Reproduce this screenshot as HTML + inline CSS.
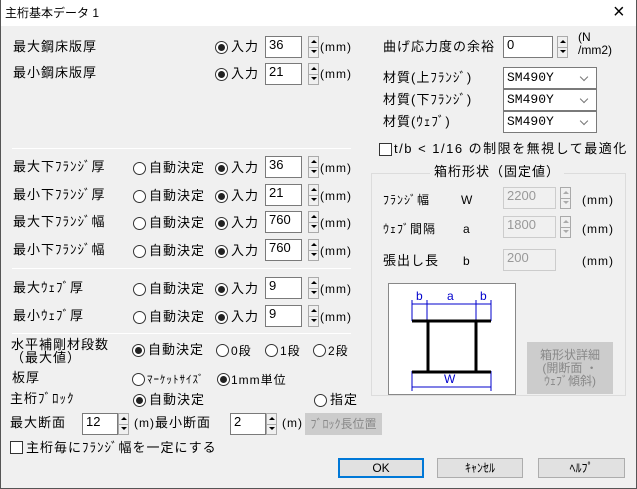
<!DOCTYPE html>
<html><head><meta charset="utf-8"><style>
*{margin:0;padding:0;box-sizing:border-box}
body{width:637px;height:489px;overflow:hidden;background:#f0f0f0;font-family:"Liberation Sans","Noto Sans CJK JP",sans-serif;font-size:13px;color:#000;position:relative}
.a{position:absolute;white-space:nowrap;line-height:16px;letter-spacing:1px}
.tb{position:absolute;left:0;top:0;width:637px;height:26px;background:#fff}
.frame{position:absolute;left:0;top:0;width:637px;height:489px;border:1px solid #555;border-top:none}
.in{position:absolute;background:#fff;border:1px solid #7a7a7a;height:22px;font-size:13px;line-height:14px;padding:1px 3px;font-family:"Liberation Sans Narrow","Liberation Sans",sans-serif}
.dis{background:#f0f0f0;border-color:#ccc;color:#999}
.sp{position:absolute;width:11px;height:22px;border:1px solid #aaa;background:#f0f0f0}
.sp:before{content:"";position:absolute;left:2px;top:3px;border:3px solid transparent;border-bottom:3px solid #000;border-top:none}
.sp:after{content:"";position:absolute;left:2px;top:13px;border:3px solid transparent;border-top:3px solid #000;border-bottom:none}
.sp i{position:absolute;left:0;top:10px;width:9px;height:1px;background:#aaa}
.sp.d:before{border-bottom-color:#aaa}.sp.d:after{border-top-color:#aaa}
.r{position:absolute;width:13px;height:13px;border:1px solid #333;border-radius:50%;background:#fff}
.r.on:after{content:"";position:absolute;left:2px;top:2px;width:7px;height:7px;border-radius:50%;background:#222}
.cb{position:absolute;width:13px;height:13px;border:1px solid #333;background:#fff}
.hr{position:absolute;height:1px;background:#a0a0a0;border-bottom:1px solid #fff}
.cmb{position:absolute;background:#fff;border:1px solid #7a7a7a;height:22px;width:94px;font-family:"Liberation Mono",monospace;font-size:13px;line-height:20px;padding-left:3px}
.cmb:after{content:"";position:absolute;right:9px;top:6px;width:5px;height:5px;border-right:1px solid #777;border-bottom:1px solid #777;transform:rotate(45deg)}
.btn{position:absolute;background:#e1e1e1;border:1px solid #adadad;text-align:center;font-size:12px;line-height:18px}
</style></head><body>
<div class="tb"></div>
<div class="a" style="left:5px;top:5px;font-size:12px;letter-spacing:0">主桁基本データ 1</div>
<div class="a" style="left:613px;top:2px;font-size:20px;line-height:20px;font-weight:200">×</div>
<div class="frame"></div>

<div class="a" style="left:13px;top:39px">最大鋼床版厚</div>
<div class="r on" style="left:215px;top:41px"></div><div class="a" style="left:231px;top:39px">入力</div>
<div class="in" style="left:265px;top:36px;width:37px">36</div><div class="sp" style="left:308px;top:36px"><i></i></div><div class="a" style="left:320px;top:39px;font-size:12px">(mm)</div>
<div class="a" style="left:13px;top:65px">最小鋼床版厚</div>
<div class="r on" style="left:215px;top:68px"></div><div class="a" style="left:231px;top:66px">入力</div>
<div class="in" style="left:265px;top:63px;width:37px">21</div><div class="sp" style="left:308px;top:63px"><i></i></div><div class="a" style="left:320px;top:66px;font-size:12px">(mm)</div>

<div class="hr" style="left:12px;top:148px;width:339px"></div>

<div class="a" style="left:13px;top:159px">最大下ﾌﾗﾝｼﾞ厚</div>
<div class="a" style="left:13px;top:187px">最小下ﾌﾗﾝｼﾞ厚</div>
<div class="a" style="left:13px;top:214px">最大下ﾌﾗﾝｼﾞ幅</div>
<div class="a" style="left:13px;top:242px">最小下ﾌﾗﾝｼﾞ幅</div>
<div class="a" style="left:13px;top:280px">最大ｳｪﾌﾞ厚</div>
<div class="a" style="left:13px;top:308px">最小ｳｪﾌﾞ厚</div>

<div class="r" style="left:133px;top:162px"></div><div class="a" style="left:149px;top:160px">自動決定</div>
<div class="r on" style="left:215px;top:162px"></div><div class="a" style="left:231px;top:160px">入力</div>
<div class="in" style="left:265px;top:156px;width:37px">36</div><div class="sp" style="left:308px;top:156px"><i></i></div><div class="a" style="left:320px;top:160px;font-size:12px">(mm)</div>

<div class="r" style="left:133px;top:190px"></div><div class="a" style="left:149px;top:188px">自動決定</div>
<div class="r on" style="left:215px;top:190px"></div><div class="a" style="left:231px;top:188px">入力</div>
<div class="in" style="left:265px;top:184px;width:37px">21</div><div class="sp" style="left:308px;top:184px"><i></i></div><div class="a" style="left:320px;top:188px;font-size:12px">(mm)</div>

<div class="r" style="left:133px;top:217px"></div><div class="a" style="left:149px;top:215px">自動決定</div>
<div class="r on" style="left:215px;top:217px"></div><div class="a" style="left:231px;top:215px">入力</div>
<div class="in" style="left:265px;top:211px;width:37px">760</div><div class="sp" style="left:308px;top:211px"><i></i></div><div class="a" style="left:320px;top:215px;font-size:12px">(mm)</div>

<div class="r" style="left:133px;top:245px"></div><div class="a" style="left:149px;top:243px">自動決定</div>
<div class="r on" style="left:215px;top:245px"></div><div class="a" style="left:231px;top:243px">入力</div>
<div class="in" style="left:265px;top:239px;width:37px">760</div><div class="sp" style="left:308px;top:239px"><i></i></div><div class="a" style="left:320px;top:243px;font-size:12px">(mm)</div>

<div class="hr" style="left:12px;top:268px;width:339px"></div>

<div class="r" style="left:133px;top:283px"></div><div class="a" style="left:149px;top:281px">自動決定</div>
<div class="r on" style="left:215px;top:283px"></div><div class="a" style="left:231px;top:281px">入力</div>
<div class="in" style="left:265px;top:277px;width:37px">9</div><div class="sp" style="left:308px;top:277px"><i></i></div><div class="a" style="left:320px;top:281px;font-size:12px">(mm)</div>

<div class="r" style="left:133px;top:311px"></div><div class="a" style="left:149px;top:309px">自動決定</div>
<div class="r on" style="left:215px;top:311px"></div><div class="a" style="left:231px;top:309px">入力</div>
<div class="in" style="left:265px;top:305px;width:37px">9</div><div class="sp" style="left:308px;top:305px"><i></i></div><div class="a" style="left:320px;top:309px;font-size:12px">(mm)</div>

<div class="hr" style="left:12px;top:333px;width:339px"></div>

<div class="a" style="left:11px;top:338px;line-height:13px">水平補剛材段数<br>（最大値）</div>
<div class="r on" style="left:132px;top:344px"></div><div class="a" style="left:148px;top:342px">自動決定</div>
<div class="r" style="left:216px;top:344px"></div><div class="a" style="left:231px;top:343px;font-size:12px">0段</div>
<div class="r" style="left:265px;top:344px"></div><div class="a" style="left:280px;top:343px;font-size:12px">1段</div>
<div class="r" style="left:313px;top:344px"></div><div class="a" style="left:328px;top:343px;font-size:12px">2段</div>

<div class="a" style="left:12px;top:370px">板厚</div>
<div class="r" style="left:132px;top:373px"></div><div class="a" style="left:147px;top:372px;font-size:11px">ﾏｰｹｯﾄｻｲｽﾞ</div>
<div class="r on" style="left:217px;top:373px"></div><div class="a" style="left:231px;top:372px;font-size:12px">1mm単位</div>

<div class="a" style="left:10px;top:391px">主桁ﾌﾞﾛｯｸ</div>
<div class="r on" style="left:133px;top:394px"></div><div class="a" style="left:149px;top:392px">自動決定</div>
<div class="r" style="left:314px;top:394px"></div><div class="a" style="left:330px;top:392px">指定</div>

<div class="a" style="left:10px;top:415px">最大断面</div>
<div class="in" style="left:82px;top:413px;width:36px">12</div><div class="sp" style="left:118px;top:413px"><i></i></div><div class="a" style="left:134px;top:415px;font-size:12px">(m)</div>
<div class="a" style="left:155px;top:415px">最小断面</div>
<div class="in" style="left:230px;top:413px;width:36px">2</div><div class="sp" style="left:266px;top:413px"><i></i></div><div class="a" style="left:282px;top:415px;font-size:12px">(m)</div>
<div class="btn" style="left:305px;top:413px;width:77px;height:22px;background:#ccc;border-color:#ccc;color:#888;line-height:20px">ﾌﾞﾛｯｸ長位置</div>

<div class="cb" style="left:10px;top:441px"></div><div class="a" style="left:26px;top:440px">主桁毎にﾌﾗﾝｼﾞ幅を一定にする</div>

<div class="a" style="left:383px;top:39px">曲げ応力度の余裕</div>
<div class="in" style="left:503px;top:36px;width:50px">0</div><div class="sp" style="left:557px;top:36px"><i></i></div>
<div class="a" style="left:578px;top:31px;font-size:12px;line-height:13px;letter-spacing:0">(N<br>/mm2)</div>
<div class="a" style="left:383px;top:70px">材質(上ﾌﾗﾝｼﾞ)</div>
<div class="a" style="left:383px;top:92px">材質(下ﾌﾗﾝｼﾞ)</div>
<div class="a" style="left:383px;top:114px">材質(ｳｪﾌﾞ)</div>
<div class="cmb" style="left:503px;top:67px">SM490Y</div>
<div class="cmb" style="left:503px;top:89px">SM490Y</div>
<div class="cmb" style="left:503px;top:111px">SM490Y</div>
<div class="cb" style="left:379px;top:143px"></div><div class="a" style="left:394px;top:141px;letter-spacing:1.5px">t/b &lt; 1/16 の制限を無視して最適化</div>

<div style="position:absolute;left:371px;top:173px;width:255px;height:223px;border:1px solid #dcdcdc"></div>
<div class="a" style="left:430px;top:164px;background:#f0f0f0;padding:0 4px">箱桁形状（固定値）</div>
<div class="a" style="left:383px;top:192px;font-size:12px">ﾌﾗﾝｼﾞ幅</div><div class="a" style="left:461px;top:192px;font-size:12px">W</div>
<div class="in dis" style="left:503px;top:187px;width:53px">2200</div><div class="sp d" style="left:560px;top:187px"><i></i></div><div class="a" style="left:582px;top:192px;font-size:12px">(mm)</div>
<div class="a" style="left:383px;top:221px;font-size:12px">ｳｪﾌﾞ間隔</div><div class="a" style="left:463px;top:221px;font-size:12px">a</div>
<div class="in dis" style="left:503px;top:216px;width:53px">1800</div><div class="sp d" style="left:560px;top:216px"><i></i></div><div class="a" style="left:582px;top:221px;font-size:12px">(mm)</div>
<div class="a" style="left:383px;top:253px">張出し長</div><div class="a" style="left:463px;top:253px;font-size:12px">b</div>
<div class="in dis" style="left:503px;top:249px;width:53px">200</div><div class="a" style="left:582px;top:253px;font-size:12px">(mm)</div>

<svg style="position:absolute;left:388px;top:283px" width="128" height="112">
<rect x="0.5" y="0.5" width="127" height="111" fill="#fff" stroke="#888"/>
<g stroke="#00c" stroke-width="1" fill="none">
<line x1="24" y1="17" x2="24" y2="38"/><line x1="39" y1="17" x2="39" y2="38"/><line x1="88" y1="17" x2="88" y2="38"/><line x1="103" y1="17" x2="103" y2="38"/>
<line x1="24" y1="21" x2="103" y2="21"/>
<line x1="24" y1="88" x2="24" y2="108"/><line x1="103" y1="88" x2="103" y2="108"/>
<line x1="24" y1="104" x2="103" y2="104"/>
</g>
<g fill="#00c" font-family="Liberation Sans" font-size="12"><text x="28" y="17">b</text><text x="59" y="17">a</text><text x="92" y="17">b</text><text x="56" y="100">W</text></g>
<g stroke="#000" stroke-width="3"><line x1="24" y1="38" x2="103" y2="38"/><line x1="24" y1="89" x2="103" y2="89"/><line x1="40" y1="38" x2="40" y2="89"/><line x1="88" y1="38" x2="88" y2="89"/></g>
</svg>
<div class="btn" style="left:527px;top:342px;width:86px;height:52px;background:#ccc;border-color:#ccc;color:#888;font-size:12px;line-height:13px;padding-top:6px">箱形状詳細<br>(開断面 ・<br>ｳｪﾌﾞ傾斜)</div>

<div class="btn" style="left:338px;top:458px;width:86px;height:20px;border:2px solid #0078d7;line-height:16px">OK</div>
<div class="btn" style="left:437px;top:458px;width:86px;height:20px">ｷｬﾝｾﾙ</div>
<div class="btn" style="left:538px;top:458px;width:87px;height:20px">ﾍﾙﾌﾟ</div>
</body></html>
